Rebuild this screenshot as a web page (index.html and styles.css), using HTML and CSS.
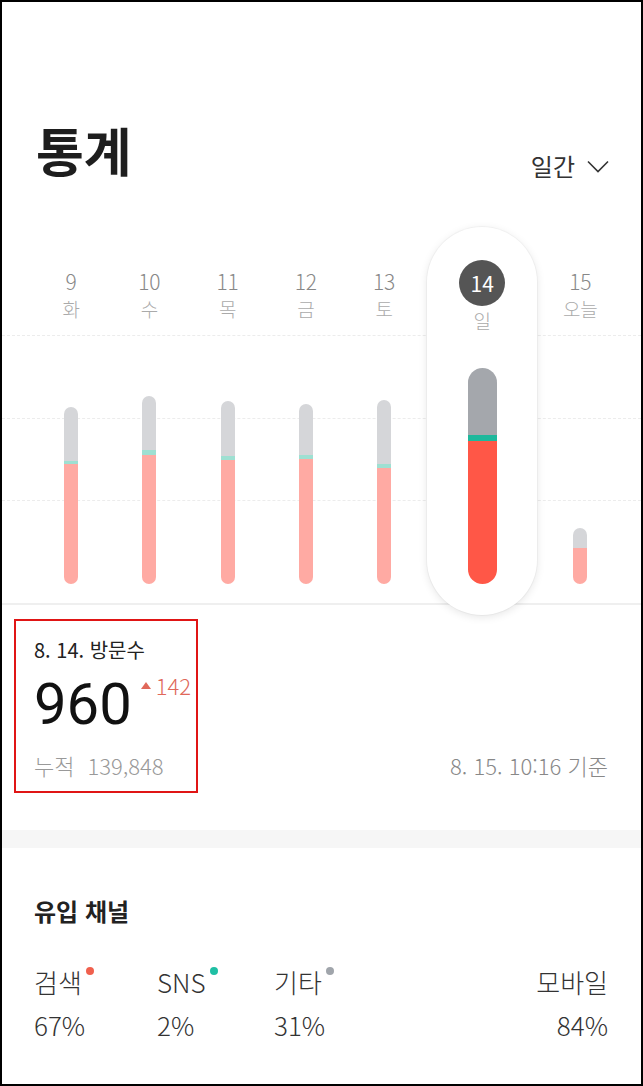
FILE: index.html
```
<!DOCTYPE html>
<html lang="ko">
<head>
    <meta charset="UTF-8">
    <meta name="viewport" content="width=device-width, initial-scale=1.0">
    <title>통계</title>
    <link rel="stylesheet" href="styles.css">
</head>
<body>
    <div class="screen">
        <header class="top">
            <h1 class="title">통계</h1>
            <div class="period">
                일간
                <svg width="22" height="13" viewBox="0 0 22 13"><polyline points="1,1.5 11,11.5 21,1.5" fill="none" stroke="#333" stroke-width="1.6"/></svg>
            </div>
        </header>

        <!-- 일별 막대 차트 -->
        <section class="chart">
            <div class="grid-line gl-1"></div>
            <div class="grid-line gl-2"></div>
            <div class="grid-line gl-3"></div>
            <div class="days">
                <div class="day">
                    <div class="day-head"><span class="num">9</span><span class="wd">화</span></div>
                    <div class="bar-area"><div class="bar"><span class="seg etc" style="height:54px"></span><span class="seg sns" style="height:3px"></span><span class="seg search" style="height:120px"></span></div></div>
                </div>
                <div class="day">
                    <div class="day-head"><span class="num">10</span><span class="wd">수</span></div>
                    <div class="bar-area"><div class="bar"><span class="seg etc" style="height:54px"></span><span class="seg sns" style="height:5px"></span><span class="seg search" style="height:129px"></span></div></div>
                </div>
                <div class="day">
                    <div class="day-head"><span class="num">11</span><span class="wd">목</span></div>
                    <div class="bar-area"><div class="bar"><span class="seg etc" style="height:55px"></span><span class="seg sns" style="height:4px"></span><span class="seg search" style="height:124px"></span></div></div>
                </div>
                <div class="day">
                    <div class="day-head"><span class="num">12</span><span class="wd">금</span></div>
                    <div class="bar-area"><div class="bar"><span class="seg etc" style="height:51px"></span><span class="seg sns" style="height:4px"></span><span class="seg search" style="height:125px"></span></div></div>
                </div>
                <div class="day">
                    <div class="day-head"><span class="num">13</span><span class="wd">토</span></div>
                    <div class="bar-area"><div class="bar"><span class="seg etc" style="height:64px"></span><span class="seg sns" style="height:4px"></span><span class="seg search" style="height:116px"></span></div></div>
                </div>
                <div class="day selected">
                    <div class="day-head"><span class="num">14</span><span class="wd">일</span></div>
                    <div class="bar-area"><div class="bar"><span class="seg etc" style="height:67px"></span><span class="seg sns" style="height:6px"></span><span class="seg search" style="height:143px"></span></div></div>
                </div>
                <div class="day">
                    <div class="day-head"><span class="num">15</span><span class="wd">오늘</span></div>
                    <div class="bar-area"><div class="bar"><span class="seg etc" style="height:20px"></span><span class="seg search" style="height:36px"></span></div></div>
                </div>
            </div>
        </section>

        <section class="summary">
            <div class="daily">
                <p class="daily-label">8. 14. 방문수</p>
                <div class="daily-row">
                    <span class="daily-count">960</span>
                    <span class="delta"><svg width="10" height="7" viewBox="0 0 10 7"><polygon points="5,0 10,7 0,7" fill="#e0685a"/></svg>142</span>
                </div>
                <p class="total">누적<span class="total-num">139,848</span></p>
            </div>
            <p class="basis">8. 15. 10:16 기준</p>
        </section>

        <div class="band"></div>

        <section class="channels">
            <h2 class="section-title">유입 채널</h2>
            <div class="channel-list">
                <div class="channel">
                    <span class="ch-name">검색<i class="dot dot-search"></i></span>
                    <span class="ch-val">67%</span>
                </div>
                <div class="channel">
                    <span class="ch-name">SNS<i class="dot dot-sns"></i></span>
                    <span class="ch-val">2%</span>
                </div>
                <div class="channel">
                    <span class="ch-name">기타<i class="dot dot-etc"></i></span>
                    <span class="ch-val">31%</span>
                </div>
                <div class="channel mobile">
                    <span class="ch-name">모바일</span>
                    <span class="ch-val">84%</span>
                </div>
            </div>
        </section>
    </div>
</body>
</html>
```

FILE: styles.css
```
body {
    margin: 0;
    background-color: #fff;
    font-family: "Noto Sans CJK KR", "Noto Sans", sans-serif;
    color: #222;
}
p {
    margin: 0;
}
.screen {
    width: 643px;
    height: 1086px;
    box-sizing: border-box;
    border: 2px solid #000;
    overflow: hidden;
    background-color: #fff;
}

/* header */
.top {
    display: flex;
    justify-content: space-between;
    align-items: flex-end;
    padding: 115px 32px 0 34px;
}
.title {
    margin: 0;
    font-size: 52px;
    line-height: 65px;
    font-weight: 700;
    color: #1e1e1e;
}
.period {
    display: flex;
    align-items: center;
    gap: 12px;
    font-size: 24px;
    line-height: 32px;
    color: #333;
}

/* chart */
.chart {
    position: relative;
    margin-top: 45px;
    border-bottom: 2px solid #efefef;
}
.grid-line {
    position: absolute;
    left: 0;
    right: 0;
    height: 0;
    border-top: 1px dashed #ececec;
    z-index: 0;
}
.gl-1 { top: 108px; }
.gl-2 { top: 191px; }
.gl-3 { top: 273px; }
.days {
    position: relative;
    z-index: 1;
    display: flex;
    align-items: flex-start;
    padding-left: 30px;
}
.day {
    width: 78.25px;
    height: 376px;
    display: flex;
    flex-direction: column;
    align-items: center;
}
.day-head {
    height: 113px;
    box-sizing: border-box;
    padding-top: 40px;
    display: flex;
    flex-direction: column;
    align-items: center;
}
.num {
    font-size: 21px;
    line-height: 28px;
    color: #888;
    font-weight: 300;
}
.wd {
    font-size: 19px;
    line-height: 28px;
    color: #aaa;
    font-weight: 300;
}
.bar-area {
    height: 244px;
    display: flex;
    align-items: flex-end;
}
.bar {
    width: 14px;
    border-radius: 7px;
    overflow: hidden;
    display: flex;
    flex-direction: column;
}
.seg {
    display: block;
}
.etc { background-color: #d5d6d9; }
.sns { background-color: #9ee0d2; }
.search { background-color: #ffaaa3; }

.day.selected {
    width: 110px;
    height: 388px;
    margin: 0 4px -12px;
    background-color: #fff;
    border-radius: 55px;
    box-shadow: 0 2px 8px rgba(0, 0, 0, 0.10), 0 0 0 1px rgba(0, 0, 0, 0.03);
}
.selected .day-head {
    padding-top: 33px;
}
.selected .num {
    width: 46px;
    height: 46px;
    border-radius: 50%;
    background-color: #555;
    color: #fff;
    font-size: 21px;
    line-height: 46px;
    text-align: center;
    font-weight: 400;
}
.selected .wd {
    margin-top: 1px;
}
.selected .bar {
    width: 29px;
    border-radius: 14.5px;
}
.selected .etc { background-color: #a4a7ac; }
.selected .sns { background-color: #1eb89c; }
.selected .search { background-color: #ff5747; }

/* summary */
.summary {
    display: flex;
    justify-content: space-between;
    align-items: flex-end;
    padding: 14px 33px 37px 12px;
}
.daily {
    width: 184px;
    box-sizing: border-box;
    border: 2px solid #e01515;
    padding: 15px 0 12px 18px;
}
.daily-label {
    font-size: 20px;
    line-height: 28px;
    color: #222;
}
.daily-row {
    display: flex;
    align-items: flex-start;
    margin-top: 10px;
}
.daily-count {
    font-family: Roboto, "Noto Sans", sans-serif;
    font-size: 58px;
    line-height: 60px;
    color: #111;
}
.delta {
    display: flex;
    align-items: center;
    gap: 5px;
    margin: -2px 0 0 9px;
    font-size: 22px;
    line-height: 26px;
    color: #e0685a;
    font-weight: 300;
}
.total {
    margin-top: 17px;
    font-size: 22px;
    line-height: 28px;
    color: #999;
    font-weight: 300;
}
.total-num {
    margin-left: 13px;
}
.basis {
    margin-bottom: 14px;
    font-size: 22px;
    line-height: 28px;
    color: #888;
    font-weight: 300;
}

.band {
    height: 18px;
    background-color: #f6f6f6;
}

/* channels */
.channels {
    padding: 47px 33px 0 32px;
}
.section-title {
    margin: 0;
    font-size: 24px;
    line-height: 32px;
    font-weight: 700;
    color: #222;
}
.channel-list {
    display: grid;
    grid-template-columns: 123px 117px 1fr auto;
    margin-top: 38px;
}
.channel {
    display: flex;
    flex-direction: column;
    align-items: flex-start;
    gap: 9px;
}
.channel.mobile {
    align-items: flex-end;
}
.ch-name {
    position: relative;
    font-size: 26px;
    line-height: 34px;
    color: #333;
    font-weight: 300;
}
.ch-val {
    font-size: 26px;
    line-height: 34px;
    color: #333;
    font-weight: 300;
}
.dot {
    position: absolute;
    top: 2px;
    right: -12px;
    width: 8px;
    height: 8px;
    border-radius: 50%;
}
.dot-search { background-color: #f0604d; }
.dot-sns { background-color: #1fbfa4; }
.dot-etc { background-color: #a0a5ab; }
```
